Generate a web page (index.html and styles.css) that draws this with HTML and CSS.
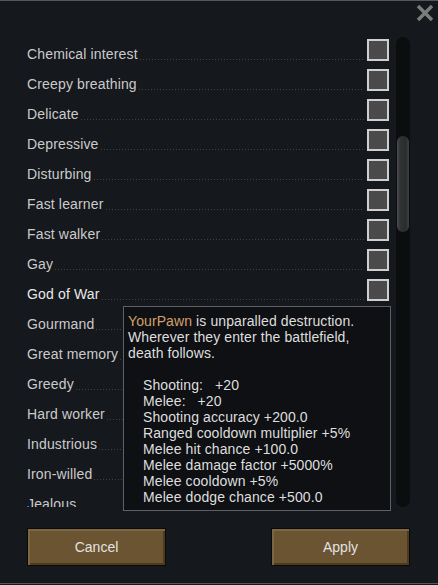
FILE: index.html
```
<!DOCTYPE html>
<html>
<head>
<meta charset="utf-8">
<link rel="stylesheet" href="styles.css">
</head>
<body>
<div class="window">
  <button class="close" aria-label="Close">
    <svg width="18" height="18" viewBox="0 0 18 18"><path d="M2 2 L16 16 M16 2 L2 16" stroke="#7c7c7c" stroke-width="3.4" stroke-linecap="butt"/></svg>
  </button>
  <div class="list-area">
    <div class="rows">
      <div class="row"><span class="label">Chemical interest</span><span class="leader"></span><span class="check"></span></div>
      <div class="row"><span class="label">Creepy breathing</span><span class="leader"></span><span class="check"></span></div>
      <div class="row"><span class="label">Delicate</span><span class="leader"></span><span class="check"></span></div>
      <div class="row"><span class="label">Depressive</span><span class="leader"></span><span class="check"></span></div>
      <div class="row"><span class="label">Disturbing</span><span class="leader"></span><span class="check"></span></div>
      <div class="row"><span class="label">Fast learner</span><span class="leader"></span><span class="check"></span></div>
      <div class="row"><span class="label">Fast walker</span><span class="leader"></span><span class="check"></span></div>
      <div class="row"><span class="label">Gay</span><span class="leader"></span><span class="check"></span></div>
      <div class="row hover"><span class="label">God of War</span><span class="leader"></span><span class="check"></span></div>
      <div class="row"><span class="label">Gourmand</span><span class="leader"></span><span class="check"></span></div>
      <div class="row"><span class="label">Great memory</span><span class="leader"></span><span class="check"></span></div>
      <div class="row"><span class="label">Greedy</span><span class="leader"></span><span class="check"></span></div>
      <div class="row"><span class="label">Hard worker</span><span class="leader"></span><span class="check"></span></div>
      <div class="row"><span class="label">Industrious</span><span class="leader"></span><span class="check"></span></div>
      <div class="row"><span class="label">Iron-willed</span><span class="leader"></span><span class="check"></span></div>
      <div class="row"><span class="label">Jealous</span><span class="leader"></span><span class="check"></span></div>
    </div>
    <div class="scrollbar"><div class="thumb"></div></div>
    <div class="tooltip">
      <div><span class="pawn">YourPawn</span> is unparalled destruction.</div>
      <div>Wherever they enter the battlefield,</div>
      <div>death follows.</div>
      <div class="blank"></div>
      <div class="stat">Shooting:&nbsp;&nbsp; +20</div>
      <div class="stat">Melee:&nbsp;&nbsp; +20</div>
      <div class="stat">Shooting accuracy +200.0</div>
      <div class="stat">Ranged cooldown multiplier +5%</div>
      <div class="stat">Melee hit chance +100.0</div>
      <div class="stat">Melee damage factor +5000%</div>
      <div class="stat">Melee cooldown +5%</div>
      <div class="stat">Melee dodge chance +500.0</div>
    </div>
  </div>
  <div class="footer">
    <button class="btn">Cancel</button>
    <button class="btn">Apply</button>
  </div>
</div>
</body>
</html>
```
FILE: styles.css
```
* { box-sizing: border-box; }
html, body {
  margin: 0;
  padding: 0;
  background: #15181c;
}
body {
  font-family: "Liberation Sans", Arial, sans-serif;
  width: 438px;
  height: 585px;
  overflow: hidden;
}
.window {
  position: relative;
  width: 438px;
  height: 585px;
  border-top: 1px solid #55585b;
  padding-top: 36px;
  display: flex;
  flex-direction: column;
}
.window::after {
  content: "";
  position: absolute;
  left: 0;
  right: 0;
  top: 582px;
  height: 1px;
  background: #55585b;
}
.close {
  position: absolute;
  top: 3px;
  right: 4px;
  width: 18px;
  height: 18px;
  padding: 0;
  border: 0;
  background: none;
}
.close svg { display: block; }
.list-area {
  position: relative;
  height: 470px;
  padding-left: 27px;
  display: flex;
  gap: 7px;
}
.rows {
  width: 362px;
  height: 470px;
  overflow: hidden;
  padding-top: 2px;
}
.row {
  display: flex;
  align-items: flex-start;
  height: 30px;
}
.label {
  font-size: 14px;
  line-height: 30px;
  letter-spacing: 0.15px;
  color: #cbcbcb;
  white-space: nowrap;
}
.row.hover .label { color: #e8e8e8; }
.leader {
  flex: 1;
  height: 1px;
  margin: 20px 3px 0 2px;
  background: repeating-linear-gradient(to right, #3f4347 0 1px, transparent 1px 3px);
}
.check {
  width: 22px;
  height: 22px;
  border: 2px solid #cfcfcf;
  background: #4a4a4a;
  flex: none;
}
.scrollbar {
  width: 14px;
  height: 470px;
  border-radius: 7px;
  background: #0b0d0f;
  padding: 99px 1px 0 1px;
}
.thumb {
  height: 96px;
  border-radius: 6px;
  background: linear-gradient(to right, #4a4c4f 0, #313336 25%, #2a2c2e 70%, #3d3f42 100%);
}
.tooltip {
  position: absolute;
  left: 123px;
  top: 269px;
  width: 268px;
  height: 205px;
  background: #0e1013;
  border: 1px solid #5c6166;
  padding: 6px 4px;
  font-size: 14px;
  line-height: 16px;
  letter-spacing: 0.1px;
  color: #dedede;
}
.tooltip .blank { height: 16px; }
.tooltip .stat { padding-left: 15px; }
.pawn { color: #d3a06b; }
.footer {
  display: flex;
  justify-content: space-between;
  padding: 21px 28px 0 27px;
}
.btn {
  width: 139px;
  height: 38px;
  border: 1px solid #0a0a0a;
  background: #6b5431;
  box-shadow: inset 2px 2px 0 #7e6640, inset -2px -2px 0 #4c3b1f;
  color: #e2e2e2;
  font-family: "Liberation Sans", Arial, sans-serif;
  font-size: 14px;
  padding: 0;
}
```
